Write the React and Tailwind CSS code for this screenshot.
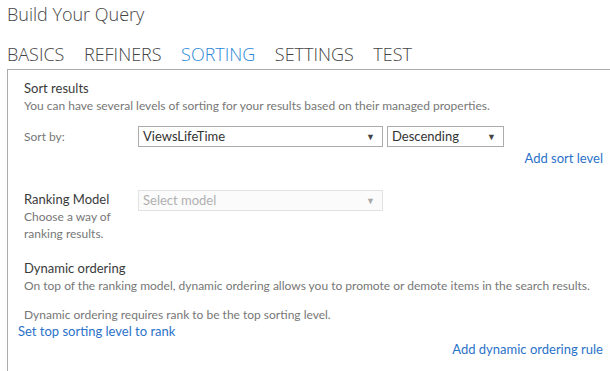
import React from "react";

const tabs = ["BASICS", "REFINERS", "SORTING", "SETTINGS", "TEST"];

const Select = ({ value, width, disabled }) => (
  <div
    className={
      "flex h-[21px] items-center justify-between border pl-[4px] pr-[7px] text-[13px] " +
      (disabled
        ? "border-[#e1e1e1] bg-[#fbfbfb] text-[#b0b0b0]"
        : "border-[#ababab] bg-white text-[#333]")
    }
    style={{ width }}
  >
    <span className="leading-none">{value}</span>
    <span
      className={
        "text-[9px] leading-none " + (disabled ? "text-[#a8a8a8]" : "text-[#444]")
      }
    >
      ▼
    </span>
  </div>
);

export default function App() {
  return (
    <div className="h-[371px] w-[610px] overflow-hidden bg-white font-['Lato',sans-serif]">
      <h1 className="pl-[7px] pt-[2px] font-['Open_Sans',sans-serif] text-[18px] font-light leading-[24px] text-[#444]">
        Build Your Query
      </h1>

      <nav className="mt-[16px] flex gap-[19.5px] pl-[7px] font-['Open_Sans',sans-serif] text-[18px] font-light leading-[24px] text-[#444]">
        {tabs.map((t) => (
          <span key={t} className={t === "SORTING" ? "text-[#2b88d8]" : ""}>
            {t}
          </span>
        ))}
      </nav>

      <div className="ml-[7px] mt-[3px] h-[400px] border-l border-t border-[#ababab] pl-[16px] pr-[7px] pt-[10px]">
        <div className="text-[13px] leading-[17px] text-[#3a3a3a]">Sort results</div>
        <div className="text-[12px] leading-[17px] text-[#777]">
          You can have several levels of sorting for your results based on their managed properties.
        </div>

        <div className="mt-[12px] flex items-center">
          <div className="w-[114px] text-[12px] text-[#777]">Sort by:</div>
          <Select value="ViewsLifeTime" width={245} />
          <div className="ml-[4px]">
            <Select value="Descending" width={117} />
          </div>
        </div>

        <div className="mt-[3px] text-right text-[13px] leading-[17px] text-[#2b72c9]">
          Add sort level
        </div>

        <div className="mt-[23px] flex items-start">
          <div className="w-[114px] pt-[1px]">
            <div className="text-[13px] leading-[17px] text-[#3a3a3a]">Ranking Model</div>
            <div className="text-[12px] leading-[17px] text-[#777]">
              Choose a way of
              <br />
              ranking results.
            </div>
          </div>
          <Select value="Select model" width={245} disabled />
        </div>

        <div className="mt-[18px] text-[13px] leading-[17px] text-[#3a3a3a]">Dynamic ordering</div>
        <div className="text-[12px] leading-[17px] text-[#777]">
          On top of the ranking model, dynamic ordering allows you to promote or demote items in the search results.
        </div>

        <div className="mt-[12px] text-[12px] leading-[17px] text-[#777]">
          Dynamic ordering requires rank to be the top sorting level.
        </div>
        <div className="-ml-[6px] text-[13px] leading-[17px] text-[#2b72c9]">
          Set top sorting level to rank
        </div>

        <div className="mt-[1px] text-right text-[13px] leading-[17px] text-[#2b72c9]">
          Add dynamic ordering rule
        </div>
      </div>
    </div>
  );
}
